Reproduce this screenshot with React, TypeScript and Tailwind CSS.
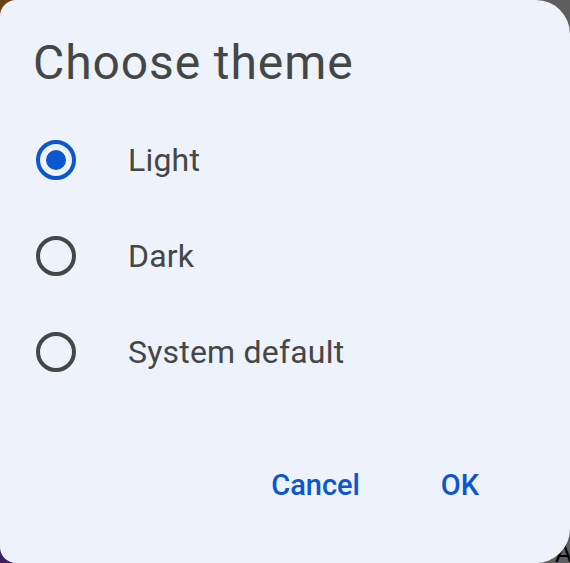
import { useState } from 'react'

const options = ['Light', 'Dark', 'System default']

const Radio = ({ checked }: { checked: boolean }) => (
    <span
        className={`flex items-center justify-center w-[40px] h-[40px] rounded-full border-[4px] ${checked ? 'border-[#0b57d0]' : 'border-[#444746]'
            }`}
    >
        {checked && <span className="w-[20px] h-[20px] rounded-full bg-[#0b57d0]" />}
    </span>
)

const App = () => {
    const [selected, setSelected] = useState('Light')

    return (
        <div
            className="relative w-[570px] h-[563px] overflow-hidden bg-[linear-gradient(to_right,transparent_50%,#5e5e5e_50%),linear-gradient(#6e4114_50%,#3b1f5f_50%)]"
            style={{ fontFamily: 'Roboto, "Noto Sans", sans-serif' }}
        >
            {/* wallpaper letter peeking out behind the dialog */}
            <span className="absolute left-[555px] top-[540px] text-[26px] leading-none text-black">A</span>

            <div className="relative z-10 flex flex-col h-full bg-[#eef2fa] rounded-l-[16px] rounded-r-[34px]">
                <h1 className="mt-[35px] ml-[33px] text-[48px] leading-[56px] tracking-[0.9px] text-[#444746]">
                    Choose theme
                </h1>

                <div className="mt-[21px] flex flex-col">
                    {options.map((option) => (
                        <button
                            key={option}
                            onClick={() => setSelected(option)}
                            className="flex items-center h-[96px] pl-[36px] gap-[52px] text-left"
                        >
                            <Radio checked={selected === option} />
                            <span className="text-[32px] leading-[40px] tracking-[0.2px] text-[#444746]">{option}</span>
                        </button>
                    ))}
                </div>

                <div className="mt-[46px] flex justify-end gap-[12px] pr-[46px]">
                    <button className="h-[80px] min-w-[128px] px-[24px] rounded-full text-[29px] font-medium text-[#0b57d0]">
                        Cancel
                    </button>
                    <button className="h-[80px] min-w-[128px] px-[24px] rounded-full text-[29px] font-medium text-[#0b57d0]">
                        OK
                    </button>
                </div>
            </div>
        </div>
    )
}

export default App
